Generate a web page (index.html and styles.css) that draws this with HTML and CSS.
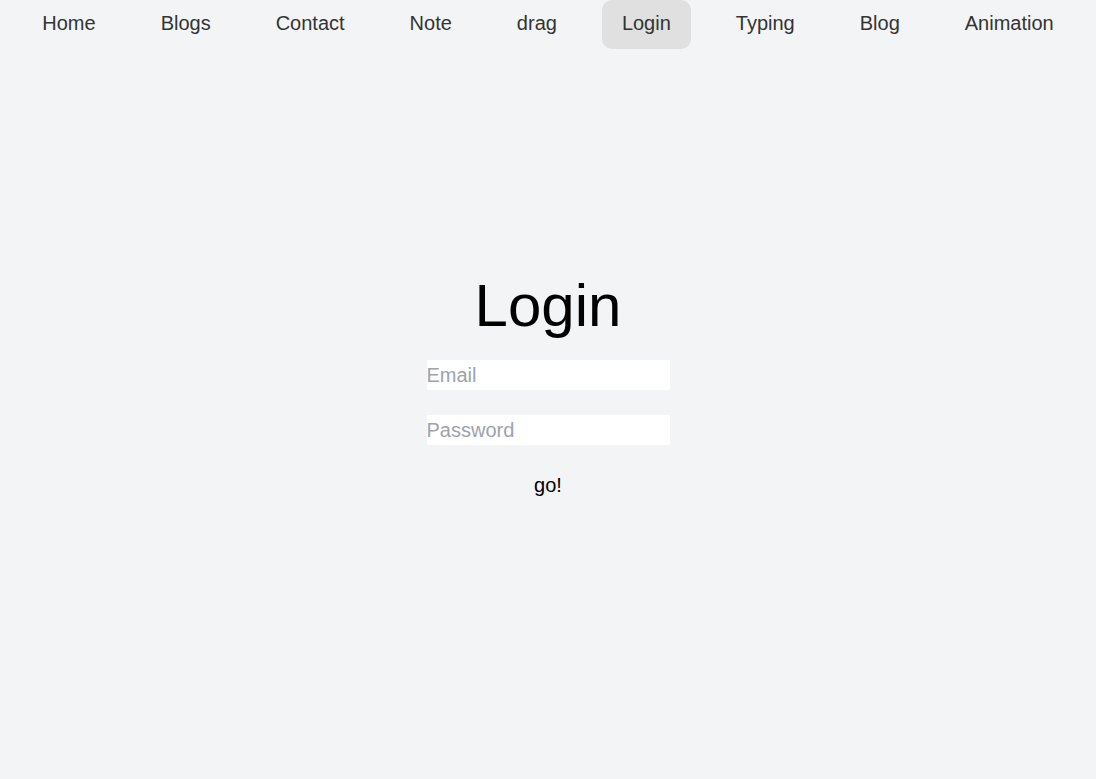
FILE: index.html
```html
<!DOCTYPE html>
<html lang="en">
<head>
<meta charset="utf-8">
<title>Login</title>
<link rel="stylesheet" href="styles.css">
</head>
<body>
<nav class="nav">
  <a class="nav-item" href="#">Home</a>
  <a class="nav-item" href="#">Blogs</a>
  <a class="nav-item" href="#">Contact</a>
  <a class="nav-item" href="#">Note</a>
  <a class="nav-item" href="#">drag</a>
  <a class="nav-item active" href="#">Login</a>
  <a class="nav-item" href="#">Typing</a>
  <a class="nav-item" href="#">Blog</a>
  <a class="nav-item" href="#">Animation</a>
</nav>
<main class="main">
  <form class="login">
    <h1 class="title">Login</h1>
    <input class="field" type="email" placeholder="Email">
    <input class="field" type="password" placeholder="Password">
    <button class="go" type="button">go!</button>
  </form>
</main>
</body>
</html>
```
FILE: styles.css
```css
* { box-sizing: border-box; }
html, body {
  margin: 0;
  padding: 0;
  background: #f3f4f6;
  font-family: "Liberation Sans", Arial, sans-serif;
}
body { min-height: 100vh; }
.nav {
  display: flex;
  justify-content: center;
  gap: 25px;
  height: 49px;
}
.nav-item {
  display: block;
  padding: 12px 20px 14px;
  font-size: 20px;
  line-height: 23px;
  color: #333333;
  text-decoration: none;
}
.nav-item.active {
  background: #e0e0e0;
  border-radius: 10px;
}
.main {
  padding-top: 222px;
}
.login {
  display: flex;
  flex-direction: column;
  align-items: center;
  margin: 0;
}
.title {
  margin: 0;
  font-size: 60px;
  line-height: 69px;
  font-weight: normal;
  color: #000;
}
.field {
  display: block;
  width: 243px;
  height: 30px;
  margin-top: 20px;
  padding: 0;
  border: none;
  background: #fff;
  font-family: "Liberation Sans", Arial, sans-serif;
  font-size: 20px;
  color: #000;
  outline: none;
}
.field + .field { margin-top: 25px; }
.field::placeholder { color: #9ca3af; }
.go {
  margin-top: 29px;
  padding: 0;
  border: none;
  background: transparent;
  font-family: "Liberation Sans", Arial, sans-serif;
  font-size: 20px;
  line-height: 23px;
  color: #000;
  cursor: pointer;
}
```
